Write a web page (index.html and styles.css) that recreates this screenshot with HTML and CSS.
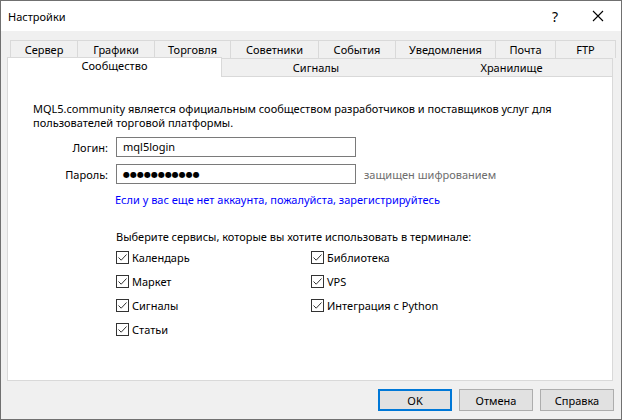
FILE: index.html
```html
<!DOCTYPE html>
<html lang="ru">
<head>
<meta charset="utf-8">
<title>Настройки</title>
<link rel="stylesheet" href="styles.css">
</head>
<body>
<div class="window">
  <div class="titlebar">
    <span class="title">Настройки</span>
    <span class="tb-help">?</span>
    <span class="tb-close">
      <svg width="12" height="12" viewBox="0 0 12 12"><path d="M1 1 L11 11 M11 1 L1 11" stroke="#000" stroke-width="1.1" fill="none"/></svg>
    </span>
  </div>
  <div class="body">
    <div class="tabs">
      <div class="tabrow row1">
        <div class="tab">Сервер</div>
        <div class="tab">Графики</div>
        <div class="tab">Торговля</div>
        <div class="tab">Советники</div>
        <div class="tab">События</div>
        <div class="tab">Уведомления</div>
        <div class="tab">Почта</div>
        <div class="tab">FTP</div>
      </div>
      <div class="tabrow row2">
        <div class="tab selected">Сообщество</div>
        <div class="tab">Сигналы</div>
        <div class="tab">Хранилище</div>
      </div>
    </div>
    <div class="panel">
      <p class="intro">MQL5.community является официальным сообществом разработчиков и поставщиков услуг для пользователей торговой платформы.</p>
      <div class="form">
        <label class="lbl">Логин:</label>
        <div class="input">mql5login</div>
        <span></span>
        <label class="lbl">Пароль:</label>
        <div class="input pwd">●●●●●●●●●●●</div>
        <span class="hint">защищен шифрованием</span>
      </div>
      <a class="link">Если у вас еще нет аккаунта, пожалуйста, зарегистрируйтесь</a>
      <p class="services">Выберите сервисы, которые вы хотите использовать в терминале:</p>
      <div class="checks">
        <div class="chk"><span class="box"><svg width="11" height="11" viewBox="0 0 11 11"><path d="M1.5 5.5 L4.2 8.2 L9.5 2.5" stroke="#333" stroke-width="1" fill="none"/></svg></span>Календарь</div>
        <div class="chk"><span class="box"><svg width="11" height="11" viewBox="0 0 11 11"><path d="M1.5 5.5 L4.2 8.2 L9.5 2.5" stroke="#333" stroke-width="1" fill="none"/></svg></span>Библиотека</div>
        <div class="chk"><span class="box"><svg width="11" height="11" viewBox="0 0 11 11"><path d="M1.5 5.5 L4.2 8.2 L9.5 2.5" stroke="#333" stroke-width="1" fill="none"/></svg></span>Маркет</div>
        <div class="chk"><span class="box"><svg width="11" height="11" viewBox="0 0 11 11"><path d="M1.5 5.5 L4.2 8.2 L9.5 2.5" stroke="#333" stroke-width="1" fill="none"/></svg></span>VPS</div>
        <div class="chk"><span class="box"><svg width="11" height="11" viewBox="0 0 11 11"><path d="M1.5 5.5 L4.2 8.2 L9.5 2.5" stroke="#333" stroke-width="1" fill="none"/></svg></span>Сигналы</div>
        <div class="chk"><span class="box"><svg width="11" height="11" viewBox="0 0 11 11"><path d="M1.5 5.5 L4.2 8.2 L9.5 2.5" stroke="#333" stroke-width="1" fill="none"/></svg></span>Интеграция с Python</div>
        <div class="chk"><span class="box"><svg width="11" height="11" viewBox="0 0 11 11"><path d="M1.5 5.5 L4.2 8.2 L9.5 2.5" stroke="#333" stroke-width="1" fill="none"/></svg></span>Статьи</div>
      </div>
    </div>
    <div class="buttons">
      <button class="btn default">OK</button>
      <button class="btn">Отмена</button>
      <button class="btn">Справка</button>
    </div>
  </div>
</div>
</body>
</html>
```
FILE: styles.css
```css
* { box-sizing: border-box; }
html, body { margin: 0; padding: 0; }
body {
  width: 622px;
  height: 420px;
  font-family: "Noto Sans", "DejaVu Sans", sans-serif;
  font-size: 11px;
  color: #000;
  background: #fff;
}
.window {
  width: 622px;
  height: 420px;
  border: 1px solid #707070;
  background: #f0f0f0;
  display: flex;
  flex-direction: column;
}
.titlebar {
  height: 30px;
  background: #fff;
  display: flex;
  align-items: center;
  padding-left: 7px;
  flex: none;
}
.title { flex: 1; font-size: 11px; }
.tb-help { width: 24px; font-size: 14px; margin-right: 8px; text-align: center; }
.tb-close { width: 46px; display: flex; justify-content: center; }
.body {
  flex: 1;
  display: flex;
  flex-direction: column;
  padding: 9px 0 0 6px;
}
.tabs { display: flex; flex-direction: column; }
.tabrow { display: grid; }
.row1 {
  grid-template-columns: 67px 77px 76px 88px 77px 100px 60px 60px;
  margin-left: 3px;
  height: 18px;
}
.row2 {
  grid-template-columns: 214px 190px 201px;
  height: 18px;
}
.tab {
  border: 1px solid #d9d9d9;
  border-bottom: none;
  margin-right: -1px;
  background: #f0f0f0;
  text-align: center;
  line-height: 17px;
  white-space: nowrap;
}
.row2 .tab { border-left: none; }
.row2 .tab.selected {
  background: #fff;
  border-left: 1px solid #d9d9d9;
  margin-top: -1px;
  height: 20px;
  position: relative;
  z-index: 2;
  line-height: 16px;
}
.panel {
  width: 606px;
  height: 305px;
  background: #fff;
  border: 1px solid #d9d9d9;
  padding: 25px 0 0 25px;
  position: relative;
  z-index: 1;
}
.intro { margin: 0; line-height: 14px; width: 530px; }
.form {
  display: grid;
  grid-template-columns: 75px 240px auto;
  column-gap: 8px;
  row-gap: 7px;
  align-items: center;
  margin-top: 7px;
}
.lbl { text-align: right; }
.input {
  height: 20px;
  border: 1px solid #7a7a7a;
  padding-left: 6px;
  line-height: 18px;
}
.pwd { font-size: 8px; letter-spacing: 0; }
.hint { color: #6d6d6d; }
.link {
  display: block;
  color: #0000ff;
  margin: 9px 0 0 82px;
  line-height: 14px;
}
.services { margin: 23px 0 0 83px; line-height: 14px; }
.checks {
  margin: 1px 0 0 83px;
  display: grid;
  grid-template-columns: 195px auto;
  grid-auto-rows: 24px;
  align-items: center;
}
.chk { display: flex; align-items: center; }
.box {
  width: 13px;
  height: 13px;
  border: 1px solid #333;
  display: flex;
  align-items: center;
  justify-content: center;
  margin-right: 3px;
}
.box svg { display: block; }
.buttons {
  display: flex;
  justify-content: flex-end;
  gap: 7px;
  padding: 8px 7px 0 0;
}
.btn {
  width: 74px;
  height: 22px;
  background: #e1e1e1;
  border: 1px solid #adadad;
  font-family: inherit;
  font-size: 11px;
  color: #000;
  padding: 0;
}
.btn.default { border: 2px solid #0078d7; }
```
